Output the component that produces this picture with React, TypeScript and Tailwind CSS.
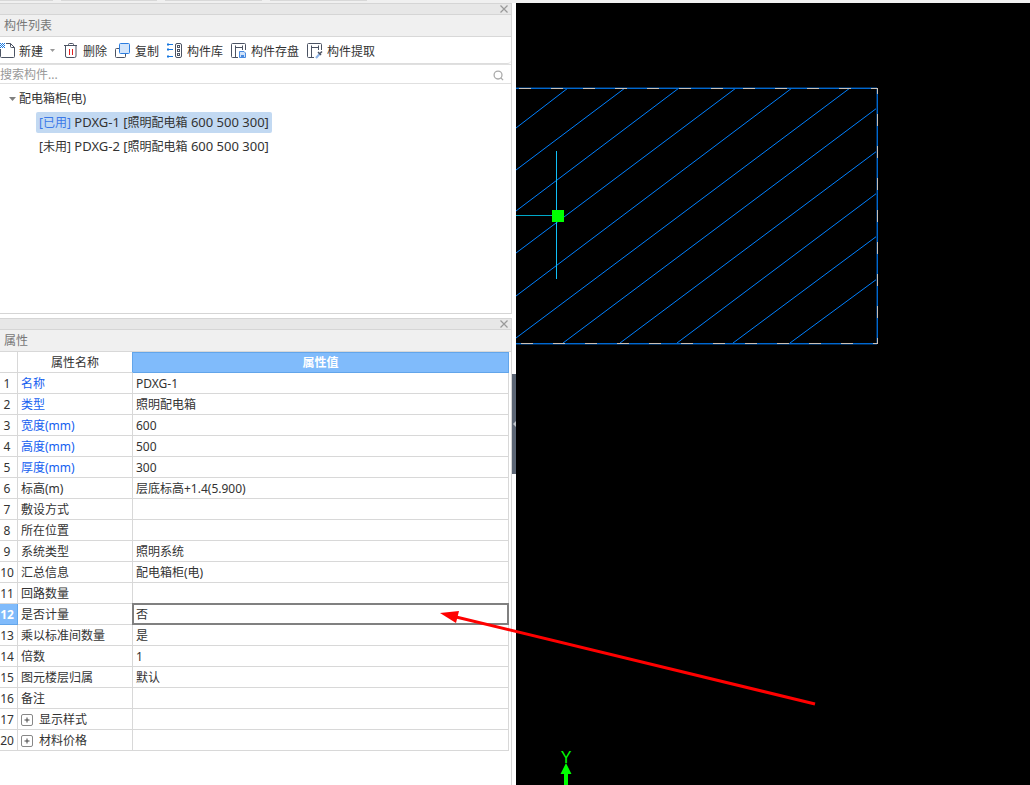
import { useState } from "react";
import type { ReactNode } from "react";

interface ComponentItem {
  id: string;
  used: boolean;
  kind: string;
  size: string;
}

interface PropertyRow {
  no: number;
  name: string;
  value: string;
  key?: boolean;
  group?: boolean;
}

const components: ComponentItem[] = [
  { id: "PDXG-1", used: true, kind: "照明配电箱", size: "600 500 300" },
  { id: "PDXG-2", used: false, kind: "照明配电箱", size: "600 500 300" },
];

const properties: PropertyRow[] = [
  { no: 1, name: "名称", value: "PDXG-1", key: true },
  { no: 2, name: "类型", value: "照明配电箱", key: true },
  { no: 3, name: "宽度(mm)", value: "600", key: true },
  { no: 4, name: "高度(mm)", value: "500", key: true },
  { no: 5, name: "厚度(mm)", value: "300", key: true },
  { no: 6, name: "标高(m)", value: "层底标高+1.4(5.900)" },
  { no: 7, name: "敷设方式", value: "" },
  { no: 8, name: "所在位置", value: "" },
  { no: 9, name: "系统类型", value: "照明系统" },
  { no: 10, name: "汇总信息", value: "配电箱柜(电)" },
  { no: 11, name: "回路数量", value: "" },
  { no: 12, name: "是否计量", value: "否" },
  { no: 13, name: "乘以标准间数量", value: "是" },
  { no: 14, name: "倍数", value: "1" },
  { no: 15, name: "图元楼层归属", value: "默认" },
  { no: 16, name: "备注", value: "" },
  { no: 17, name: "显示样式", value: "", group: true },
  { no: 20, name: "材料价格", value: "", group: true },
];

// Hatch segments of the distribution box: x1, y1, x2, y2
const hatch = [
  [0, 125, 52, 85],
  [0, 167, 109, 85],
  [0, 208, 163, 85],
  [0, 250, 220, 85],
  [0, 293, 276, 85],
  [0, 335, 334, 85],
  [47, 340, 361, 105],
  [104, 340, 361, 148],
  [161, 340, 361, 190],
  [217, 340, 361, 233],
  [274, 340, 361, 276],
];

function NewIcon() {
  return (
    <svg width="15" height="16" viewBox="0 0 15 16" fill="none">
      <path
        d="M6 .5h4.500l4 4v9a1 1 0 0 1-1 1h-12a1 1 0 0 1-1-1V6M10.500 .5v3a1 1 0 0 0 1 1h3"
        stroke="#4b5363"
      />
      <path
        d="M0 0h1v1H0zM2 0h1v1H2zM4 0h1v1H4zM1 1h1v1H1zM3 1h1v1H3zM0 2h1v1H0zM2 2h1v1H2zM4 2h1v1H4zM1 3h1v1H1zM3 3h1v1H3zM0 4h1v1H0zM2 4h1v1H2zM4 4h1v1H4z"
        fill="#1677e0"
      />
    </svg>
  );
}

function TrashIcon() {
  return (
    <svg width="16" height="16" viewBox="0 0 16 16" fill="none">
      <path
        d="M1 2.500h13M5.500 2.500v-1a1 1 0 0 1 1-1h3a1 1 0 0 1 1 1v1M2.500 2.500V13A1.500 1.500 0 0 0 4 14.500h7.500A1.500 1.500 0 0 0 13 13V2.500"
        stroke="#4b5363"
      />
      <path d="M6.500 6v6M9.500 6v6" stroke="#e02020" />
    </svg>
  );
}

function CopyIcon() {
  return (
    <svg width="16" height="16" viewBox="0 0 16 16" fill="none">
      <path
        d="M4 5.500H1.500a1 1 0 0 0-1 1V13.500a1 1 0 0 0 1 1H9.500a1 1 0 0 0 1-1V11"
        stroke="#4b5363"
      />
      <rect x="4.500" y=".5" width="10" height="10" rx="1" fill="#d3e5fb" stroke="#2b7de0" />
    </svg>
  );
}

function LibraryIcon() {
  return (
    <svg width="16" height="16" viewBox="0 0 16 16" fill="none">
      <rect x="8.500" y=".5" width="6" height="14" rx="1.500" stroke="#4b5363" />
      <rect x="10.500" y="2.500" width="2" height="2" stroke="#4b5363" />
      <rect x="10.500" y="6.500" width="2" height="2" stroke="#4b5363" />
      <rect x="10.500" y="10.500" width="2" height="2" stroke="#4b5363" />
      <path d="M2 1.500h4M2 6.500h4M2 13.500h4" stroke="#1677e0" />
      <path d="M0 1l1-1 1.500 1.500L1 3 0 2zM0 6l1-1 1.500 1.500L1 8 0 7zM0 13l1-1 1.500 1.500L1 15l-1-1z" fill="#1677e0" />
    </svg>
  );
}

// Shared by the save and extract tools
function ComponentFrame() {
  return (
    <path
      d="M7 14.500H1.500a1 1 0 0 1-1-1v-12a1 1 0 0 1 1-1h12a1 1 0 0 1 1 1V7M4.500 14.500V2.500M4.500 4.500h7.500M11.500 2.500V7"
      stroke="#4b5363"
    />
  );
}

function SaveIcon() {
  return (
    <svg width="16" height="16" viewBox="0 0 16 16" fill="none">
      <ComponentFrame />
      <path d="M8.500 8.500h4.500l1.500 1.500v4.500h-6z" fill="#cfe2fa" stroke="#4a8be0" />
      <path d="M10 12h3v3h-3z" fill="#4a8be0" />
    </svg>
  );
}

function ExtractIcon() {
  return (
    <svg width="16" height="16" viewBox="0 0 16 16" fill="none">
      <ComponentFrame />
      <path d="M9 15l4-4.500" stroke="#8eb4e6" strokeWidth="2" />
      <path d="M11 9l3 3M13 10.500l2-2" stroke="#4b5363" strokeWidth="1.500" />
    </svg>
  );
}

function CloseButton({ label }: { label: string }) {
  return (
    <button type="button" aria-label={label} className="flex h-2.5 w-3.5 items-center justify-center">
      <svg width="8" height="8" viewBox="0 0 8 8" stroke="#999999" strokeWidth="1.2">
        <path d="M.5 .5l7 7M7.500 .5l-7 7" />
      </svg>
    </button>
  );
}

function PanelHeader({ title }: { title: string }) {
  return (
    <header className="border-b border-[#d8d8d8] bg-[#f0f0f0]">
      <div className="flex h-3 items-center justify-end border-y border-[#d5d5d5] bg-[#e7e7e7]">
        <CloseButton label={`关闭${title}`} />
      </div>
      <h2 className="px-1 leading-[21px] text-[#777777]">{title}</h2>
    </header>
  );
}

function ToolButton({ icon, label, menu }: { icon: ReactNode; label: string; menu?: boolean }) {
  return (
    <button type="button" className="flex shrink-0 items-center gap-1 whitespace-nowrap">
      {icon}
      <span className="pt-0.5">{label}</span>
      {menu && (
        <svg width="8" height="4" viewBox="0 0 8 4" fill="#999999">
          <path d="M3 0h5L5.500 3z" />
        </svg>
      )}
    </button>
  );
}

function ComponentList() {
  const [selected, setSelected] = useState("PDXG-1");

  return (
    <section className="mr-0.5 border-r border-b border-[#d5d5d5]">
      <PanelHeader title="构件列表" />
      <div className="flex h-[27px] items-center gap-2 overflow-hidden rounded-r border-b border-[#dddddd] pt-0.5">
        <ToolButton icon={<NewIcon />} label="新建" menu />
        <ToolButton icon={<TrashIcon />} label="删除" />
        <ToolButton icon={<CopyIcon />} label="复制" />
        <ToolButton icon={<LibraryIcon />} label="构件库" />
        <ToolButton icon={<SaveIcon />} label="构件存盘" />
        <ToolButton icon={<ExtractIcon />} label="构件提取" />
      </div>
      <label className="flex h-5 items-center border-t border-b border-[#e0e0e0] pt-0.5 pr-[7px]">
        <input
          type="text"
          aria-label="搜索构件"
          placeholder="搜索构件..."
          className="min-w-0 flex-1 outline-none placeholder:text-[#999999]"
        />
        <svg width="11" height="11" viewBox="0 0 12 12" fill="none" stroke="#aaaaaa" strokeWidth="1.400">
          <circle cx="5.500" cy="5.500" r="4.300" />
          <path d="M8.500 8.500l2.500 2.500" />
        </svg>
      </label>
      <div className="flex min-h-[229px] flex-col items-start gap-[3px] pt-1">
        <button type="button" className="flex h-[21px] items-center gap-[3px] pl-[9px]">
          <svg width="7" height="4" viewBox="0 0 7 4" fill="#808080">
            <path d="M0 0h7L3.500 4z" />
          </svg>
          配电箱柜(电)
        </button>
        {components.map((item) => (
          <button
            key={item.id}
            type="button"
            onClick={() => setSelected(item.id)}
            className={`ml-9 h-[21px] rounded-xs px-[3px] whitespace-nowrap ${
              item.id === selected ? "bg-[#c2d9f2]" : ""
            }`}
          >
            <span className={item.used ? "text-[#3a78e8]" : ""}>{item.used ? "[已用]" : "[未用]"}</span>
            <span className="text-[13px]"> {item.id} [</span>
            {item.kind}
            <span className="text-[13px]"> {item.size}]</span>
          </button>
        ))}
      </div>
    </section>
  );
}

function PropertyPanel() {
  const [active, setActive] = useState(12);
  const [activeValue, setActiveValue] = useState("否");

  return (
    <section className="mt-1 mr-0.5 flex-1 border-r border-[#d5d5d5]">
      <PanelHeader title="属性" />
      <div className="pr-0.5">
        <table className="w-full table-fixed border-separate border-spacing-0">
          <colgroup>
            <col className="w-[18px]" />
            <col className="w-[115px]" />
            <col />
          </colgroup>
          <thead>
            <tr className="h-[21px]">
              <th className="border-r border-b border-[#d8d8d8]" />
              <th className="border-r border-b border-r-[#62a5ea] border-b-[#d8d8d8] pt-0.5 leading-[18px] font-normal">
                属性名称
              </th>
              <th className="border-t border-r border-b border-[#62a5ea] bg-[#80bbfb] leading-[19px] font-bold text-white">
                属性值
              </th>
            </tr>
          </thead>
          <tbody>
            {properties.map((row) => (
              <tr key={row.no} className="h-[21px]" onClick={() => !row.group && setActive(row.no)}>
                <td
                  className={`border-r border-b pt-0.5 pr-[3px] text-center leading-[18px] ${
                    row.no === active
                      ? "border-[#62a5ea] bg-[#80bbfb] font-bold text-white"
                      : "border-[#d8d8d8]"
                  }`}
                >
                  {row.no}
                </td>
                <td
                  className={`border-r border-b border-[#d8d8d8] pt-0.5 pl-[3px] leading-[18px] whitespace-nowrap ${
                    row.key ? "text-[#1560f0]" : ""
                  }`}
                >
                  {row.group ? (
                    <button type="button" className="flex items-center gap-1.5">
                      <svg width="12" height="12" viewBox="0 0 12 12" fill="none">
                        <rect x=".5" y=".5" width="11" height="11" rx="1.500" stroke="#888888" />
                        <path d="M3.500 6h5M6 3.500v5" stroke="#444444" />
                      </svg>
                      {row.name}
                    </button>
                  ) : (
                    row.name
                  )}
                </td>
                <td className="relative border-r border-b border-[#d8d8d8] pt-0.5 pl-[3px] leading-[18px]">
                  {row.no === 12 && active === 12 ? (
                    <input
                      type="text"
                      aria-label={row.name}
                      value={activeValue}
                      onChange={(e) => setActiveValue(e.target.value)}
                      className="absolute -inset-px border-2 border-[#808080] bg-white pt-0.5 pl-0.5 outline-none"
                    />
                  ) : (
                    row.value
                  )}
                </td>
              </tr>
            ))}
          </tbody>
        </table>
      </div>
    </section>
  );
}

function DrawingView() {
  return (
    <main className="relative flex-1 overflow-hidden bg-black">
      <svg width="362" height="342" viewBox="0 0 362 342" fill="none">
        <g stroke="#0080ff">
          {hatch.map(([x1, y1, x2, y2]) => (
            <line key={`${x1}-${y1}-${x2}`} x1={x1} y1={y1} x2={x2} y2={y2} />
          ))}
        </g>
        <path d="M0 84.500H361M0 341.500H361M360.500 85V341" stroke="#002b58" />
        <path d="M0 85.500H361.500V340.500H0" stroke="#0068d0" />
        <g stroke="#c8c0b8" strokeDasharray="12 20">
          <path d="M3 85.500H362" />
          <path d="M5 340.500H362" />
          <path d="M361.500 85V341" strokeDashoffset="6" />
        </g>
        <path d="M0 212h37v1H0z" fill="#00a8c8" />
        <path d="M40 148h1v128h-1z" fill="#10c0f8" />
        <path d="M36 207h12v12H36z" fill="#00ff00" />
      </svg>
      <svg className="absolute bottom-0 left-[40px]" width="20" height="36" viewBox="0 0 20 36">
        <text x="10" y="14" textAnchor="middle" fill="#00ff00" fontSize="16" fontFamily="Liberation Sans">
          Y
        </text>
        <path d="M10 14l5.500 11H12v11H8V25H4.500z" fill="#00ff00" />
      </svg>
    </main>
  );
}

export default function App() {
  return (
    <div className="relative flex min-h-screen flex-col bg-white font-['Noto_Sans','Noto_Sans_CJK_SC',sans-serif] text-[12px] text-[#333333]">
      <div className="flex h-[3px] gap-2 bg-[#f0f0f0]">
        <span className="h-px w-[53px] bg-[#d8d8d8]" />
        <span className="h-px w-24 bg-[#d8d8d8]" />
        <span className="h-px w-[97px] bg-[#d8d8d8]" />
        <span className="h-px w-[97px] bg-[#d8d8d8]" />
      </div>
      <div className="flex flex-1">
        <aside className="flex min-w-0 flex-1 flex-col">
          <ComponentList />
          <PropertyPanel />
        </aside>
        <div className="relative w-0.5">
          <button
            type="button"
            aria-label="收起面板"
            className="absolute top-[371px] right-0 flex h-[100px] w-1 items-center justify-end bg-[#5c6675]"
          >
            <svg width="3" height="6" viewBox="0 0 3 6" fill="#c0c5cc">
              <path d="M3 0v6L0 3z" />
            </svg>
          </button>
        </div>
        <DrawingView />
      </div>
      <svg
        className="pointer-events-none absolute top-[610px] left-[440px]"
        width="378"
        height="98"
        viewBox="0 0 378 98"
      >
        <path d="M12 6L375 94" stroke="#ff0000" strokeWidth="3" />
        <path d="M0 3l19-2-3 12z" fill="#ff0000" />
      </svg>
    </div>
  );
}
